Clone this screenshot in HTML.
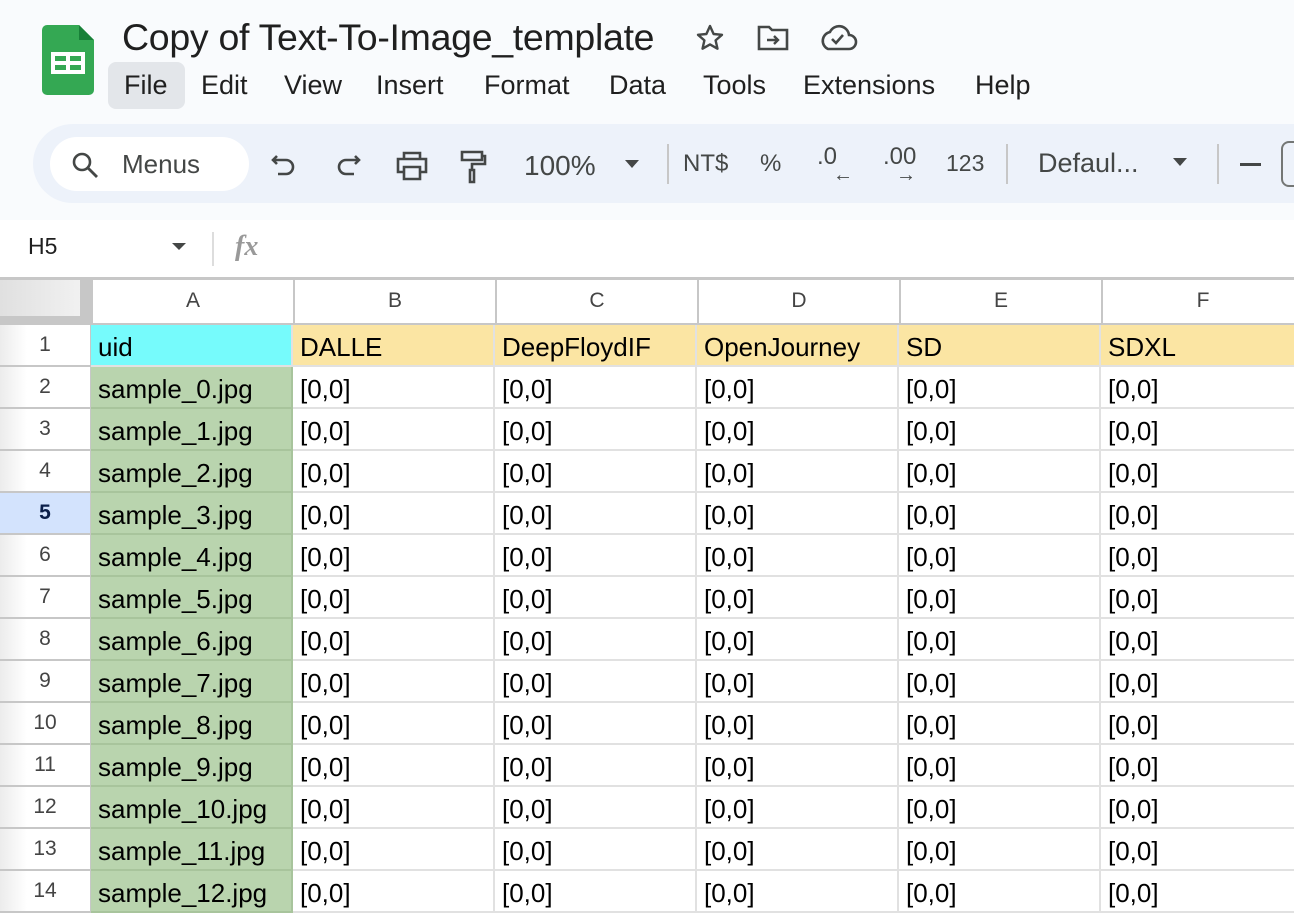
<!DOCTYPE html>
<html><head><meta charset="utf-8"><style>
*{margin:0;padding:0;box-sizing:border-box}
body{width:1294px;height:900px;overflow:hidden;background:#fff;font-family:"Liberation Sans",Arial,sans-serif;position:relative;color:#1f1f1f}
.a{position:absolute}
.top{left:0;top:0;width:1294px;height:220px;background:#f9fbfd}
.title{left:122px;top:16px;font-size:37.5px;color:#1f1f1f;letter-spacing:-0.3px}
.menu{top:70px;font-size:27px;color:#1f1f1f}
.pill{left:33px;top:124px;width:1300px;height:79px;background:#edf2fa;border-radius:40px}
.search{left:50px;top:137px;width:199px;height:54px;background:#fff;border-radius:27px}
.tb{top:148px;font-size:26px;color:#444746}
.sep{width:2px;background:#c7c7c7;top:144px;height:40px}
.ch{position:absolute;top:277px;height:48px;border-left:2px solid #c7c7c7;border-top:3px solid #c7c7c7;border-bottom:2px solid #c7c7c7;text-align:center;font-size:21px;line-height:42px;color:#444;background:#fff}
.rh{position:absolute;left:0;width:91px;height:42px;border-bottom:2px solid #c7c7c7;border-right:1px solid #c7c7c7;text-align:center;font-size:21px;line-height:40px;color:#444;background:linear-gradient(90deg,#ececec,#fff 30%)}
.c{position:absolute;height:42px;border-right:2px solid #e1e1e1;border-bottom:2px solid #e1e1e1;font-size:26px;line-height:44px;padding-left:7px;color:#000;white-space:nowrap;overflow:hidden}
</style></head><body>
<div class="a top"></div>
<svg class="a" style="left:42px;top:25px" width="52" height="70" viewBox="0 0 52 70"><path d="M5 0h32l15 15v50a5 5 0 0 1-5 5H5a5 5 0 0 1-5-5V5a5 5 0 0 1 5-5z" fill="#34a853"/><path d="M37 0v15h15z" fill="#188038"/><rect x="9" y="27" width="34" height="22" fill="#fff"/><rect x="13" y="31" width="11" height="5" fill="#34a853"/><rect x="28" y="31" width="11" height="5" fill="#34a853"/><rect x="13" y="40" width="11" height="5" fill="#34a853"/><rect x="28" y="40" width="11" height="5" fill="#34a853"/></svg>
<div class="a title">Copy of Text-To-Image_template</div>
<svg class="a" style="left:694px;top:22px" width="32" height="32" viewBox="0 0 24 24"><path d="M12 3l2.7 6 6.3.6-4.8 4.2 1.4 6.2L12 16.8 6.4 20l1.4-6.2L3 9.6l6.3-.6z" fill="none" stroke="#444746" stroke-width="1.8" stroke-linejoin="round"/></svg>
<svg class="a" style="left:756px;top:24px" width="34" height="28" viewBox="0 0 34 28"><path d="M3 3h10l3 3h15v19H3z" fill="none" stroke="#444746" stroke-width="2.6"/><path d="M11 16h11M18 12l4 4-4 4" fill="none" stroke="#444746" stroke-width="2.4"/></svg>
<svg class="a" style="left:818px;top:24px" width="40" height="28" viewBox="0 0 40 28"><path d="M10 25h21a7 7 0 0 0 0-14 10 10 0 0 0-19-3A9 9 0 0 0 10 25z" fill="none" stroke="#444746" stroke-width="2.6"/><path d="M14 15l4 4 7-8" fill="none" stroke="#444746" stroke-width="2.6"/></svg>
<div class="a" style="left:108px;top:62px;width:77px;height:47px;background:#e3e6ea;border-radius:8px"></div>
<div class="a menu" style="left:124px">File</div>
<div class="a menu" style="left:201px">Edit</div>
<div class="a menu" style="left:284px">View</div>
<div class="a menu" style="left:376px">Insert</div>
<div class="a menu" style="left:484px">Format</div>
<div class="a menu" style="left:609px">Data</div>
<div class="a menu" style="left:703px">Tools</div>
<div class="a menu" style="left:803px">Extensions</div>
<div class="a menu" style="left:975px">Help</div>
<div class="a pill"></div>
<div class="a search"></div>
<svg class="a" style="left:70px;top:150px" width="34" height="30" viewBox="0 0 34 30"><circle cx="12" cy="12" r="8" fill="none" stroke="#444746" stroke-width="2.6"/><path d="M18 18l9 9" stroke="#444746" stroke-width="2.8"/></svg>
<div class="a tb" style="left:122px;top:149px">Menus</div>
<svg class="a" style="left:270px;top:152px" width="30" height="30" viewBox="0 0 30 30"><path d="M7 4L3 8l4 4M3 8h13a7 7 0 0 1 0 14H8" fill="none" stroke="#444746" stroke-width="2.6"/></svg>
<svg class="a" style="left:332px;top:152px" width="30" height="30" viewBox="0 0 30 30"><path d="M23 4l4 4-4 4M27 8H14a7 7 0 0 0 0 14h8" fill="none" stroke="#444746" stroke-width="2.6"/></svg>
<svg class="a" style="left:395px;top:150px" width="34" height="32" viewBox="0 0 34 32"><path d="M9 9V3h16v6M9 22H3V9h28v13h-6M9 17h16v12H9z" fill="none" stroke="#444746" stroke-width="2.6"/></svg>
<svg class="a" style="left:458px;top:150px" width="30" height="36" viewBox="0 0 30 36"><path d="M4 2h20v8H4zM24 6h3v8H14v6M12 20h4v12h-4z" fill="none" stroke="#444746" stroke-width="2.6"/></svg>
<div class="a tb" style="left:524px;top:150px;font-size:28px">100%</div>
<div class="a" style="left:625px;top:160px;border:7px solid transparent;border-top:8px solid #444746"></div>
<div class="a sep" style="left:667px"></div>
<div class="a tb" style="left:683px;top:150px;font-size:24px">NT$</div>
<div class="a tb" style="left:760px;top:150px;font-size:24px">%</div>
<div class="a tb" style="left:817px;top:143px;font-size:24px">.0</div>
<div class="a tb" style="left:833px;top:164px;font-size:20px">←</div>
<div class="a tb" style="left:883px;top:143px;font-size:24px">.00</div>
<div class="a tb" style="left:896px;top:164px;font-size:20px">→</div>
<div class="a tb" style="left:946px;top:150px;font-size:23px">123</div>
<div class="a sep" style="left:1006px"></div>
<div class="a tb" style="left:1038px;top:148px;font-size:27px">Defaul...</div>
<div class="a" style="left:1173px;top:158px;border:7px solid transparent;border-top:8px solid #444746"></div>
<div class="a sep" style="left:1217px"></div>
<div class="a" style="left:1240px;top:163px;width:21px;height:3px;background:#444746"></div>
<div class="a" style="left:1281px;top:141px;width:30px;height:46px;border:2px solid #747775;border-radius:8px"></div>
<div class="a" style="left:28px;top:233px;font-size:23px;color:#1f1f1f">H5</div>
<div class="a" style="left:172px;top:243px;border:7px solid transparent;border-top:7px solid #444746"></div>
<div class="a" style="left:212px;top:232px;width:2px;height:34px;background:#ddd"></div>
<div class="a" style="left:235px;top:231px;font-size:28px;color:#999;font-family:'Liberation Serif',serif;font-style:italic;font-weight:bold">fx</div>
<div class="a" style="left:0;top:277px;width:91px;height:48px;background:linear-gradient(90deg,#e0e0e0,#f3f3f3);border-top:3px solid #c7c7c7"></div>
<div class="a" style="left:80px;top:277px;width:11px;height:48px;background:#c7c7c7"></div>
<div class="a" style="left:0;top:316px;width:91px;height:9px;background:#c7c7c7"></div>
<div class="ch" style="left:91px;width:202px">A</div>
<div class="ch" style="left:293px;width:202px">B</div>
<div class="ch" style="left:495px;width:202px">C</div>
<div class="ch" style="left:697px;width:202px">D</div>
<div class="ch" style="left:899px;width:202px">E</div>
<div class="ch" style="left:1101px;width:202px">F</div>
<div id="g"></div>
<div class="rh" style="top:325px">1</div>
<div class="c" style="top:325px;left:91px;width:202px;background:#76fbfc">uid</div>
<div class="c" style="top:325px;left:293px;width:202px;background:#fbe5a3">DALLE</div>
<div class="c" style="top:325px;left:495px;width:202px;background:#fbe5a3">DeepFloydIF</div>
<div class="c" style="top:325px;left:697px;width:202px;background:#fbe5a3">OpenJourney</div>
<div class="c" style="top:325px;left:899px;width:202px;background:#fbe5a3">SD</div>
<div class="c" style="top:325px;left:1101px;width:202px;background:#fbe5a3">SDXL</div>
<script>
var h='';
for(var i=2;i<=14;i++){var t=367+(i-2)*42;
var st=i==5?'background:#d3e3fd;color:#0b1f4a;font-weight:bold;':'';
h+='<div class="rh" style="top:'+t+'px;'+st+'">'+i+'</div>';
h+='<div class="c" style="top:'+t+'px;left:91px;width:202px;background:#b9d4ae;border-right-color:#a8c49c;border-bottom-color:#a8c49c">sample_'+(i-2)+'.jpg</div>';
for(var j=0;j<5;j++)h+='<div class="c" style="top:'+t+'px;left:'+(293+j*202)+'px;width:202px">[0,0]</div>';}
document.getElementById('g').outerHTML=h;
</script>
</body></html>
